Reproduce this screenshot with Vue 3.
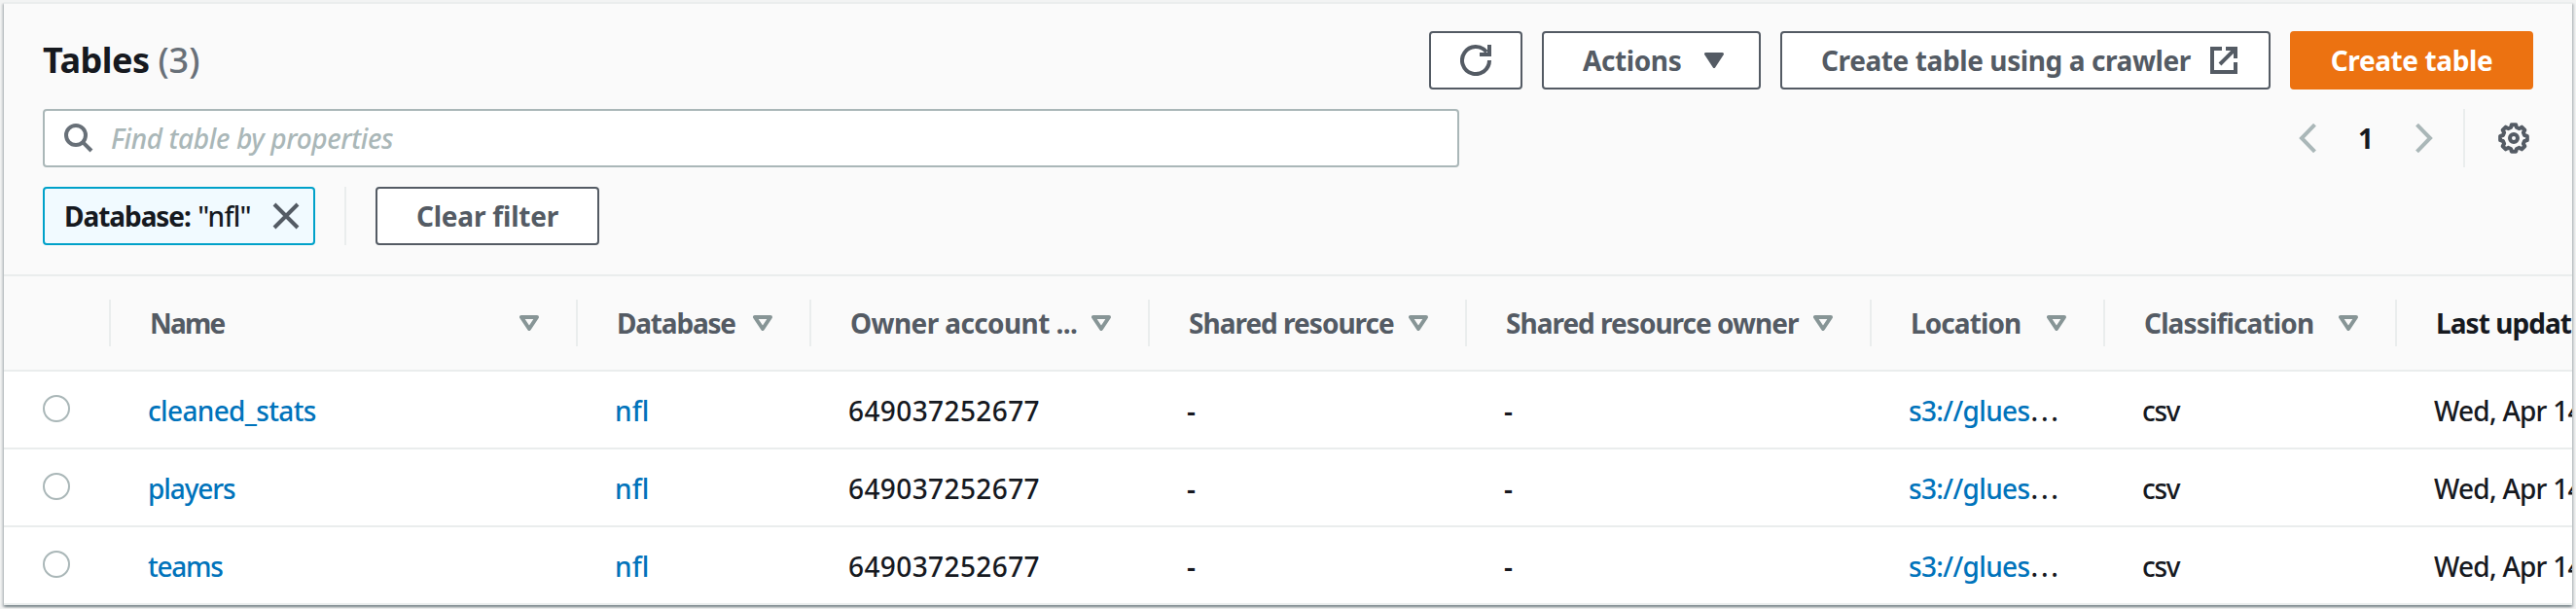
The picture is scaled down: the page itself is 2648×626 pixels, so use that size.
<script setup>
// Column widths are in pixels; "track" fine-tunes the letter spacing of a heading.
const columns = [
  { key: 'name', label: 'Name', width: 480, track: -1.8 },
  { key: 'database', label: 'Database', width: 240, track: -1.2 },
  { key: 'owner', label: 'Owner account ...', width: 348, track: -0.6 },
  { key: 'shared', label: 'Shared resource', width: 326, track: -0.99 },
  { key: 'sharedOwner', label: 'Shared resource owner', width: 416, track: -0.99 },
  { key: 'location', label: 'Location', width: 240, track: -0.91 },
  { key: 'classification', label: 'Classification', width: 300, track: -0.85 },
  { key: 'updated', label: 'Last updated', width: 400, track: -0.95, sorted: true },
]

const rows = [
  { name: 'cleaned_stats', track: -0.65 },
  { name: 'players', track: -1.1 },
  { name: 'teams', track: -1.3 },
]

// Outline of an eight-toothed cog in a 32px box.
const gearPath = (() => {
  const pts = []
  for (let i = 0; i < 8; i++) {
    const base = i * 45
    for (const [offset, r] of [[-9, 14], [9, 14], [15, 11.4], [30, 11.4]]) {
      const a = ((base + offset) * Math.PI) / 180
      pts.push(`${(16 + r * Math.cos(a)).toFixed(2)} ${(16 + r * Math.sin(a)).toFixed(2)}`)
    }
  }
  return `M${pts.join('L')}Z`
})()
</script>

<template>
  <div class="page">
    <section class="panel">
      <header class="top">
        <div class="title-row">
          <h2 class="title">Tables <span class="count">(3)</span></h2>
          <div class="actions">
            <button class="btn btn-icon" aria-label="Refresh">
              <svg width="32" height="32" viewBox="0 0 32 32" fill="none" stroke="#545b64" stroke-width="4">
                <path d="M30 16A14 14 0 1 1 27 7.4" />
                <path d="M30 0V10H20" />
              </svg>
            </button>
            <button class="btn btn-actions">
              <span>Actions</span>
              <svg width="20" height="16" viewBox="0 0 20 16">
                <path d="M1.5 1.5H18.5L10 14.5Z" fill="#545b64" stroke="#545b64" stroke-width="3" stroke-linejoin="round" />
              </svg>
            </button>
            <button class="btn btn-crawler">
              <span>Create table using a crawler</span>
              <svg width="28" height="28" viewBox="0 0 28 28" fill="none" stroke="#545b64" stroke-width="4">
                <path d="M12 2H2V26H26V16" />
                <path d="M16 2H26V12M26 2L10 18" />
              </svg>
            </button>
            <button class="btn btn-primary"><span>Create table</span></button>
          </div>
        </div>

        <div class="search-row">
          <div class="search">
            <svg width="30" height="30" viewBox="0 0 30 30" fill="none" stroke="#687078" stroke-width="4">
              <circle cx="12" cy="12" r="10" />
              <path d="M18.8 18.8L28 28" />
            </svg>
            <span class="placeholder">Find table by properties</span>
          </div>
          <div class="pager">
            <svg width="18" height="30" viewBox="0 0 18 30" fill="none" stroke="#aab7b8" stroke-width="4">
              <path d="M16.5 1.2L3 15L16.5 28.8" />
            </svg>
            <span class="page-number">1</span>
            <svg width="18" height="30" viewBox="0 0 18 30" fill="none" stroke="#aab7b8" stroke-width="4">
              <path d="M1.5 1.2L15 15L1.5 28.8" />
            </svg>
            <i class="rule rule-pager"></i>
            <svg width="32" height="32" viewBox="0 0 32 32" fill="none" stroke="#545b64" stroke-width="4" stroke-linejoin="round">
              <path :d="gearPath" />
              <circle cx="16" cy="16" r="4" />
            </svg>
          </div>
        </div>

        <div class="filter-row">
          <div class="token">
            <span><b>Database:</b> <span class="value">"nfl"</span></span>
            <svg width="28" height="28" viewBox="0 0 28 28" fill="none" stroke="#545b64" stroke-width="4">
              <path d="M2 2L26 26M26 2L2 26" />
            </svg>
          </div>
          <i class="rule rule-filter"></i>
          <button class="btn btn-clear"><span>Clear filter</span></button>
        </div>
      </header>

      <div class="row head">
        <div class="pick"><i class="divider"></i></div>
        <div
          v-for="c in columns"
          :key="c.key"
          class="th"
          :class="{ sorted: c.sorted }"
          :style="{ width: c.width + 'px', letterSpacing: c.track + 'px' }"
        >
          <span>{{ c.label }}</span>
          <svg v-if="!c.sorted" width="20" height="16" viewBox="0 0 20 16">
            <path d="M2 2H18L10 14Z" fill="none" stroke="#879596" stroke-width="4" stroke-linejoin="round" />
          </svg>
          <i v-if="!c.sorted" class="divider"></i>
        </div>
      </div>

      <div v-for="r in rows" :key="r.name" class="row body">
        <div class="pick"><i class="radio"></i></div>
        <div class="td c-name"><a :style="{ letterSpacing: r.track + 'px' }">{{ r.name }}</a></div>
        <div class="td c-db"><a>nfl</a></div>
        <div class="td c-owner">649037252677</div>
        <div class="td c-shared">-</div>
        <div class="td c-shared-owner">-</div>
        <div class="td c-loc"><a>s3://glues</a><span>...</span></div>
        <div class="td c-class">csv</div>
        <div class="td c-updated">Wed, Apr 14</div>
      </div>
    </section>
  </div>
</template>

<style>
body {
  background: #f2f3f3;
}
</style>

<style scoped>
.page {
  box-sizing: border-box;
  width: 2648px;
  height: 626px;
  padding: 2px 4px 4px;
  overflow: hidden;
  background: #f2f3f3;
  color: #16191f;
  font: 460 28px/40px "Noto Sans", "Open Sans", sans-serif;
  white-space: nowrap;
}
.panel {
  box-sizing: border-box;
  height: 620px;
  border-top: 2px solid #eaeded;
  background: #fff;
  box-shadow: 0 2px 2px rgba(0, 28, 36, 0.3), 2px 2px 2px rgba(0, 28, 36, 0.15), -2px 2px 2px rgba(0, 28, 36, 0.15);
}
svg {
  display: block;
  flex: none;
}
.top {
  box-sizing: border-box;
  height: 280px;
  padding: 28px 40px 0;
  display: flex;
  flex-direction: column;
  gap: 20px;
  background: #fafafa;
  border-bottom: 2px solid #eaeded;
}
.title-row,
.search-row {
  display: flex;
  align-items: center;
  justify-content: space-between;
  height: 60px;
}
.title {
  margin: 0;
  font-size: 36px;
  font-weight: 700;
  letter-spacing: -0.5px;
}
.count {
  font-weight: 460;
  letter-spacing: 0;
  color: #687078;
}
.actions {
  display: flex;
  gap: 20px;
}
.btn {
  box-sizing: border-box;
  height: 60px;
  margin: 0;
  padding: 0;
  display: flex;
  align-items: center;
  justify-content: center;
  border: 2px solid #545b64;
  border-radius: 4px;
  background: #fff;
  color: #545b64;
  font: inherit;
  font-weight: 700;
  letter-spacing: -0.4px;
}
.btn-icon {
  width: 96px;
}
.btn-actions {
  width: 225px;
  justify-content: space-between;
  padding: 0 36px 0 40px;
}
.btn-crawler {
  width: 504px;
  justify-content: space-between;
  padding: 0 32px 0 40px;
}
.btn-primary {
  width: 250px;
  background: #ec7211;
  border-color: #ec7211;
  color: #fff;
}
.btn-clear {
  width: 230px;
  letter-spacing: -0.2px;
}
.search {
  box-sizing: border-box;
  width: 1456px;
  height: 60px;
  padding-left: 20px;
  display: flex;
  align-items: center;
  gap: 18px;
  border: 2px solid #aab7b8;
  border-radius: 4px;
  background: #fff;
}
.placeholder {
  font-style: italic;
  letter-spacing: -0.38px;
  color: #aab7b8;
}
.pager {
  display: flex;
  align-items: center;
  padding-right: 4px;
}
.page-number {
  width: 102px;
  text-align: center;
  font-weight: 700;
}
.rule {
  width: 2px;
  height: 60px;
  background: #eaeded;
}
.rule-pager {
  margin: 0 34px 0 31px;
}
.rule-filter {
  margin: 0 30px;
}
.filter-row {
  display: flex;
  align-items: center;
}
.token {
  box-sizing: border-box;
  width: 280px;
  height: 60px;
  padding: 0 14px 0 20px;
  display: flex;
  align-items: center;
  justify-content: space-between;
  border: 2px solid #00a1c9;
  border-radius: 4px;
  background: #f1faff;
}
.token b {
  letter-spacing: -1.05px;
}
.value {
  letter-spacing: -0.7px;
}
.row {
  box-sizing: border-box;
  display: flex;
  overflow: hidden;
  border-bottom: 2px solid #eaeded;
}
.head {
  height: 98px;
  background: #fafafa;
}
.body {
  height: 80px;
}
.pick {
  box-sizing: border-box;
  flex: none;
  width: 110px;
  display: flex;
  align-items: center;
}
.head .pick {
  justify-content: flex-end;
}
.body .pick {
  padding: 0 0 2px 40px;
}
.divider {
  flex: none;
  width: 2px;
  height: 48px;
  background: #eaeded;
}
.radio {
  box-sizing: border-box;
  width: 28px;
  height: 28px;
  border: 2px solid #aab7b8;
  border-radius: 50%;
  background: #fff;
}
.th {
  box-sizing: border-box;
  flex: none;
  display: flex;
  align-items: center;
  padding-left: 40px;
  font-weight: 700;
  color: #545b64;
}
.th svg {
  margin: 0 38px 0 auto;
}
.sorted {
  color: #16191f;
}
.td {
  box-sizing: border-box;
  flex: none;
  display: flex;
  align-items: center;
  padding: 2px 0 0 38px;
}
.td a {
  color: #0073bb;
  font-weight: 530;
}
.c-name {
  width: 480px;
}
.c-db {
  width: 240px;
  letter-spacing: 0.1px;
}
.c-owner {
  width: 348px;
  letter-spacing: 0.4px;
}
.c-shared {
  width: 326px;
}
.c-shared-owner {
  width: 416px;
}
.c-shared,
.c-shared-owner {
  font-weight: 600;
}
.c-loc {
  width: 240px;
}
.c-loc a {
  letter-spacing: -0.65px;
}
.c-loc span {
  margin-left: 1px;
  letter-spacing: 2.8px;
}
.c-class {
  width: 300px;
  letter-spacing: -1.3px;
}
.c-updated {
  width: 400px;
  letter-spacing: -0.75px;
}
</style>
